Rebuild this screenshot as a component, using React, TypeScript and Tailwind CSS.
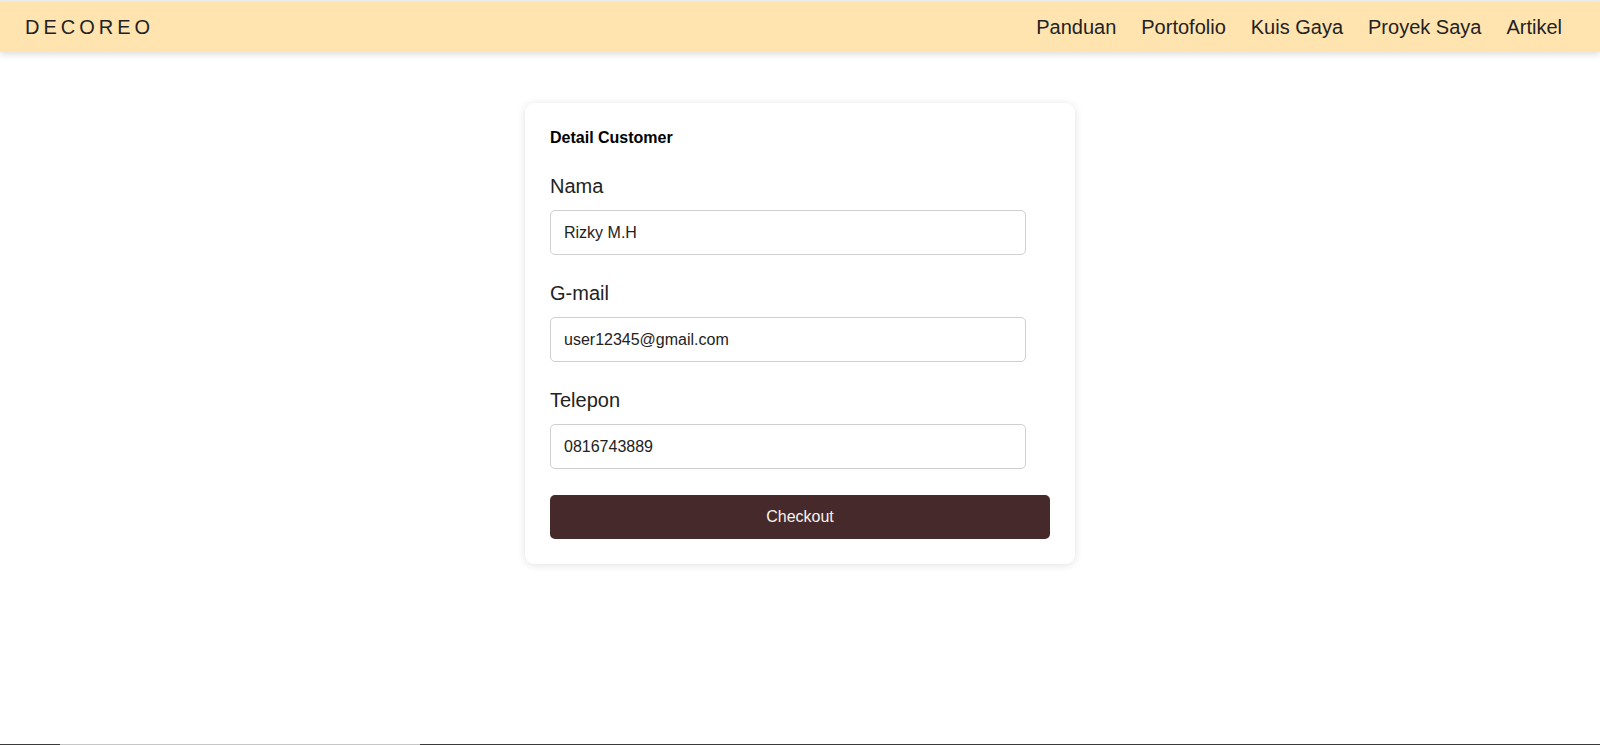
import React from "react";

export default function App() {
  const links = ["Panduan", "Portofolio", "Kuis Gaya", "Proyek Saya", "Artikel"];
  const fields = [
    { label: "Nama", value: "Rizky M.H" },
    { label: "G-mail", value: "user12345@gmail.com" },
    { label: "Telepon", value: "0816743889" },
  ];
  return (
    <div
      className="h-[745px] flex flex-col bg-white text-[#222]"
      style={{ fontFamily: '"Liberation Sans", Arial, sans-serif' }}
    >
      <div className="h-[2px] bg-[#ededed]" />
      <nav className="h-[50px] bg-[#ffe4b0] shadow-[0_3px_6px_rgba(0,0,0,0.12)] flex items-center justify-between pl-[25px] pr-[38px] relative z-10">
        <div className="text-[20px] tracking-[4px] text-[#222]">DECOREO</div>
        <ul className="flex gap-[25px] text-[20px] text-[#222]">
          {links.map((l) => (
            <li key={l}>{l}</li>
          ))}
        </ul>
      </nav>
      <main className="flex-1 flex justify-center pt-[51px]">
        <div className="w-[550px] self-start bg-white rounded-[9px] shadow-[0_1px_8px_rgba(0,0,0,0.12)] px-[25px] pt-[26px] pb-[25px]">
          <h3 className="text-[16px] leading-[18px] font-bold text-black mb-[28px]">Detail Customer</h3>
          {fields.map((f) => (
            <div key={f.label} className="mb-[27px]">
              <div className="text-[20px] leading-[23px] mb-[12px] text-[#222]">{f.label}</div>
              <div className="w-[476px] h-[45px] border border-[#cfcfcf] rounded-[5px] flex items-center px-[13px] text-[16px] text-[#222]">
                {f.value}
              </div>
            </div>
          ))}
          <button className="w-[500px] h-[44px] bg-[#462a2b] rounded-[5px] text-[#f7f3ee] text-[16px] -mt-[1px] block">
            Checkout
          </button>
        </div>
      </main>
      <div className="h-[1px] flex">
        <div className="w-[60px] bg-[#3a3a3a]" />
        <div className="w-[360px] bg-[#c6c6c6]" />
        <div className="flex-1 bg-[#3a3a3a]" />
      </div>
    </div>
  );
}
